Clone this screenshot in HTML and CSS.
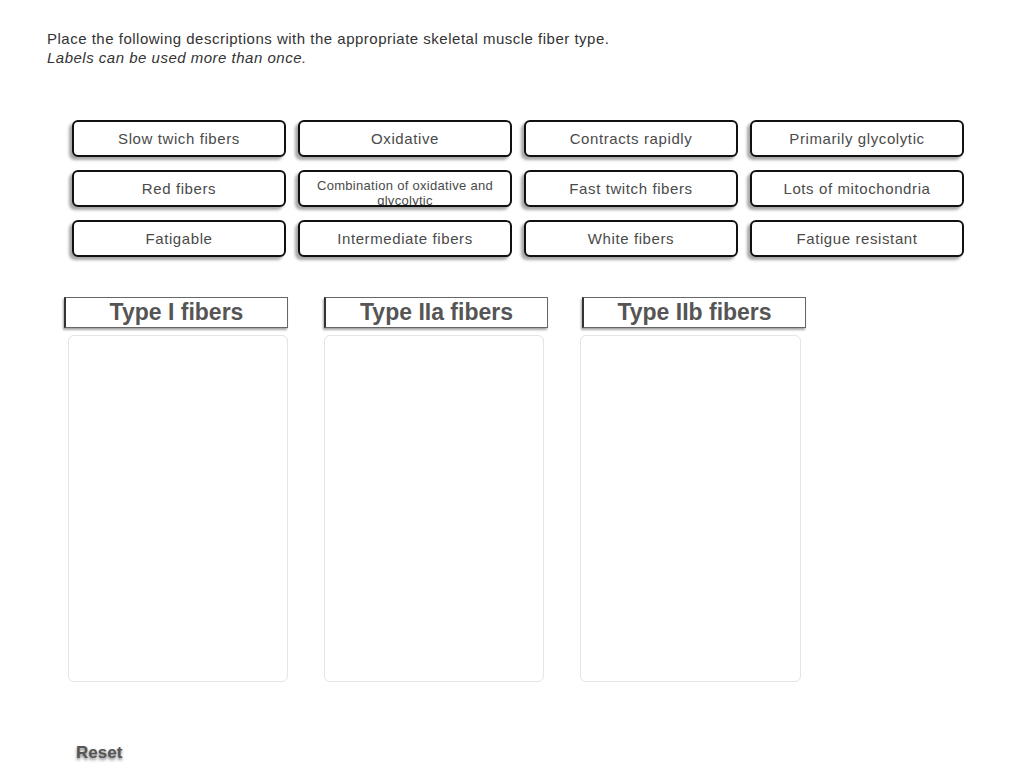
FILE: index.html
```html
<!DOCTYPE html>
<html lang="en">
<head>
    <meta charset="UTF-8">
    <title>Skeletal muscle fiber types</title>
    <link rel="stylesheet" href="styles.css">
</head>
<body>
    <div class="question">
        <p class="prompt">Place the following descriptions with the appropriate skeletal muscle fiber type.</p>
        <p class="prompt-note">Labels can be used more than once.</p>
    </div>

    <div class="label-bank">
        <div class="label">Slow twich fibers</div>
        <div class="label">Oxidative</div>
        <div class="label">Contracts rapidly</div>
        <div class="label">Primarily glycolytic</div>
        <div class="label">Red fibers</div>
        <div class="label label-small">Combination of oxidative and glycolytic</div>
        <div class="label">Fast twitch fibers</div>
        <div class="label">Lots of mitochondria</div>
        <div class="label">Fatigable</div>
        <div class="label">Intermediate fibers</div>
        <div class="label">White fibers</div>
        <div class="label">Fatigue resistant</div>
    </div>

    <div class="targets">
        <div class="target target-first">
            <div class="target-title">Type I fibers</div>
            <div class="drop-zone"></div>
        </div>
        <div class="target">
            <div class="target-title">Type IIa fibers</div>
            <div class="drop-zone"></div>
        </div>
        <div class="target target-last">
            <div class="target-title">Type IIb fibers</div>
            <div class="drop-zone"></div>
        </div>
    </div>

    <div class="reset">Reset</div>
</body>
</html>
```
FILE: styles.css
```css
* {
    margin: 0;
    padding: 0;
    box-sizing: border-box;
}

body {
    font-family: "Liberation Sans", Arial, sans-serif;
    background: #fff;
    color: #333;
    width: 1024px;
    height: 768px;
    overflow: hidden;
}

.question {
    padding: 29px 0 0 47px;
    font-size: 15px;
    line-height: 19px;
    letter-spacing: 0.5px;
    color: #333;
}

.prompt-note {
    font-style: italic;
}

.label-bank {
    display: grid;
    grid-template-columns: repeat(4, 214px);
    grid-auto-rows: 37px;
    column-gap: 12px;
    row-gap: 13px;
    padding-left: 72px;
    margin-top: 53px;
}

.label {
    border: 2px solid #111;
    border-radius: 6px;
    background: #fff;
    box-shadow: -3px 3px 3px rgba(0,0,0,0.35);
    display: flex;
    align-items: center;
    justify-content: center;
    font-size: 15px;
    letter-spacing: 0.6px;
    color: #4a4a4a;
    text-align: center;
}

.label-small {
    font-size: 13px;
    line-height: 15px;
    letter-spacing: 0.3px;
    align-items: flex-start;
    padding: 6px 6px 0;
    overflow: hidden;
}

.targets {
    display: flex;
    margin-top: 40px;
    padding-left: 64px;
}

.target {
    width: 224px;
    margin-right: 36px;
}

.target-last {
    margin-left: -2px;
}

.target-title {
    height: 31px;
    border: 1px solid #666;
    border-left: 2px solid #333;
    box-shadow: -1px 2px 2px rgba(0,0,0,0.35);
    background: #fff;
    text-align: center;
    font-size: 23px;
    font-weight: bold;
    line-height: 29px;
    color: #555;
}

.drop-zone {
    width: 220px;
    height: 347px;
    margin-top: 7px;
    border: 1px solid #e4e4e4;
    border-radius: 6px;
}

.target-first .drop-zone {
    margin-left: 4px;
}

.target-last .drop-zone {
    margin-left: -2px;
    width: 221px;
}

.reset {
    margin: 61px 0 0 76px;
    font-size: 17px;
    font-weight: bold;
    color: #555;
    text-shadow: 0 2px 3px rgba(0,0,0,0.5);
}
```
